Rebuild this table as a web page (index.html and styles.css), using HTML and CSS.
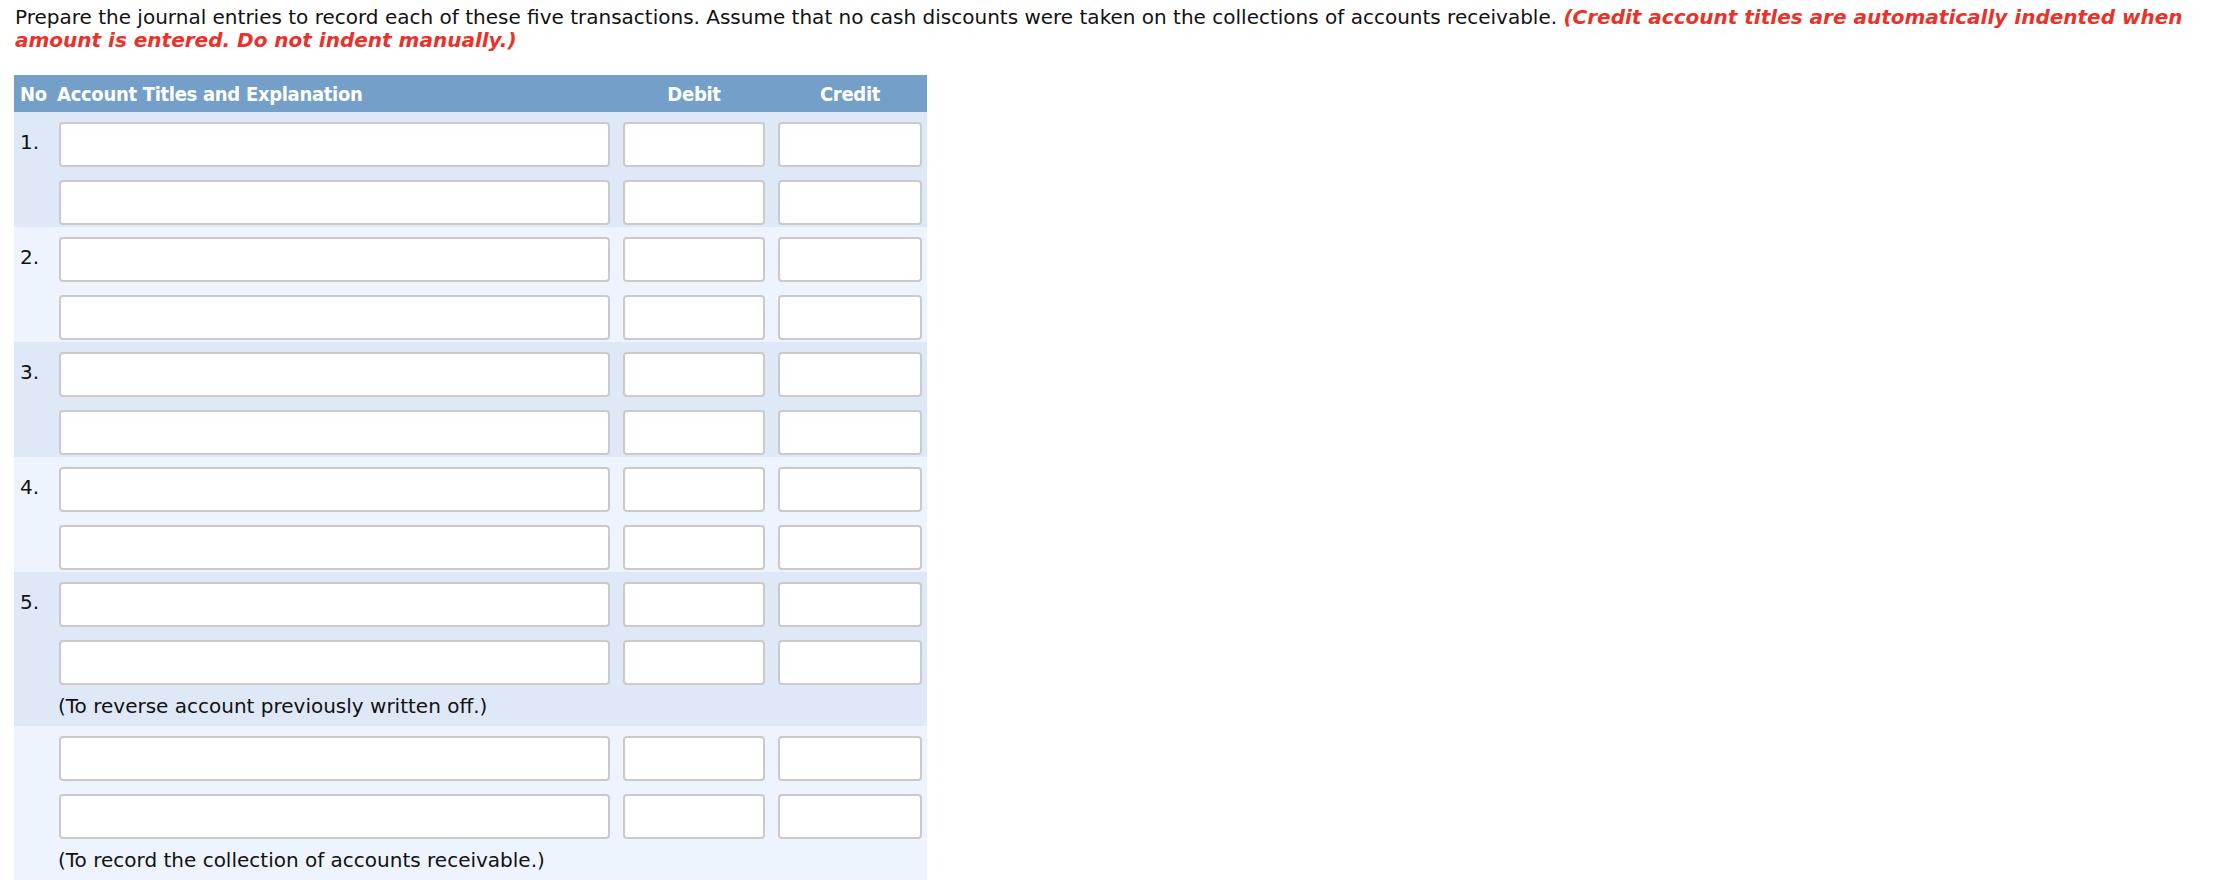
FILE: index.html
```html
<!DOCTYPE html>
<html lang="en">
<head>
<meta charset="utf-8">
<title>Journal entries</title>
<link rel="stylesheet" href="styles.css">
</head>
<body>
<p class="intro">Prepare the journal entries to record each of these five transactions. Assume that no cash discounts were taken on the collections of accounts receivable. <em class="warn">(Credit account titles are automatically indented when amount is entered. Do not indent manually.)</em></p>

<div class="journal">
  <div class="jhead">
    <div class="h-no">No</div>
    <div class="h-acct">Account Titles and Explanation</div>
    <div class="h-amt">Debit</div>
    <div class="h-amt">Credit</div>
  </div>

  <div class="band dark">
    <div class="line"><div class="no">1.</div><input class="fld" type="text"><input class="fld" type="text"><input class="fld" type="text"></div>
    <div class="line"><div class="no"></div><input class="fld" type="text"><input class="fld" type="text"><input class="fld" type="text"></div>
  </div>

  <div class="band light">
    <div class="line"><div class="no">2.</div><input class="fld" type="text"><input class="fld" type="text"><input class="fld" type="text"></div>
    <div class="line"><div class="no"></div><input class="fld" type="text"><input class="fld" type="text"><input class="fld" type="text"></div>
  </div>

  <div class="band dark">
    <div class="line"><div class="no">3.</div><input class="fld" type="text"><input class="fld" type="text"><input class="fld" type="text"></div>
    <div class="line"><div class="no"></div><input class="fld" type="text"><input class="fld" type="text"><input class="fld" type="text"></div>
  </div>

  <div class="band light">
    <div class="line"><div class="no">4.</div><input class="fld" type="text"><input class="fld" type="text"><input class="fld" type="text"></div>
    <div class="line"><div class="no"></div><input class="fld" type="text"><input class="fld" type="text"><input class="fld" type="text"></div>
  </div>

  <div class="band dark noted">
    <div class="line"><div class="no">5.</div><input class="fld" type="text"><input class="fld" type="text"><input class="fld" type="text"></div>
    <div class="line"><div class="no"></div><input class="fld" type="text"><input class="fld" type="text"><input class="fld" type="text"></div>
    <div class="note">(To reverse account previously written off.)</div>
  </div>

  <div class="band light noted">
    <div class="line"><div class="no"></div><input class="fld" type="text"><input class="fld" type="text"><input class="fld" type="text"></div>
    <div class="line"><div class="no"></div><input class="fld" type="text"><input class="fld" type="text"><input class="fld" type="text"></div>
    <div class="note">(To record the collection of accounts receivable.)</div>
  </div>
</div>
</body>
</html>
```

FILE: styles.css
```css
* { box-sizing: border-box; }

body {
  margin: 0;
  padding: 6px 14px 0 14px;
  font-family: "DejaVu Sans", Verdana, sans-serif;
  font-size: 20px;
  color: #111;
  background: #fff;
}

.intro {
  margin: 0 0 24px 0;
  line-height: 22.6px;
  padding-left: 1px;
}

.warn {
  color: #e8322a;
  font-weight: bold;
  font-style: italic;
}

.journal {
  width: 913px;
}

.jhead,
.line {
  display: grid;
  grid-template-columns: 32px 551px 142px 144px;
  column-gap: 13px;
  padding-right: 5px;
}

.jhead {
  height: 37px;
  align-items: center;
  background: #739fc9;
  color: #fff;
  font-family: "DejaVu Sans Condensed", "DejaVu Sans", sans-serif;
  font-stretch: condensed;
  font-weight: bold;
  font-size: 20px;
  letter-spacing: -0.3px;
  white-space: nowrap;
}

.h-no { padding-left: 6px; }
.h-acct { margin-left: -2px; }
.h-amt { text-align: center; }

.band {
  padding: 10px 0 2px 0;
  display: flex;
  flex-direction: column;
  gap: 13px;
}

.band.noted {
  gap: 0;
  padding-bottom: 8px;
}
.band.noted .line + .line { margin-top: 13px; }

.dark { background: #dfe8f6; }
.light { background: #edf4fd; }

.no {
  padding: 9px 0 0 6px;
  line-height: 23px;
}

.fld {
  display: block;
  width: 100%;
  height: 45px;
  margin: 0;
  border: 2px solid #cacaca;
  border-radius: 4px;
  background: #fff;
  font: inherit;
}

.note {
  margin-top: 9px;
  padding-left: 44px;
  line-height: 24px;
}
```
